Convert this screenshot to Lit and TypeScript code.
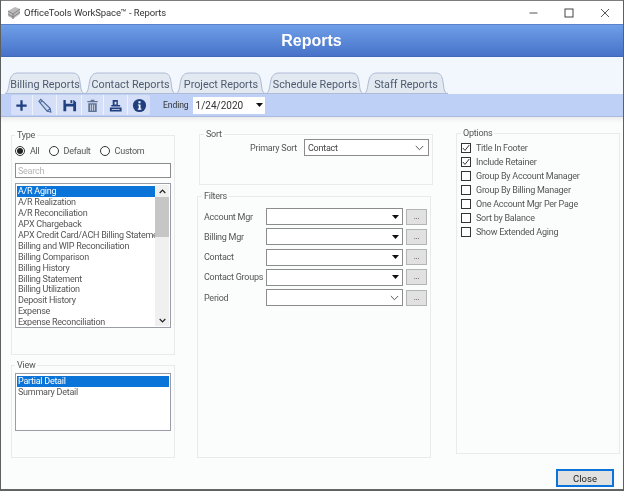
import { LitElement, html, css, svg } from "lit";
import { customElement } from "lit/decorators.js";

const TABS: [string, number][] = [["Billing Reports", 80], ["Contact Reports", 91], ["Project Reports", 90], ["Schedule Reports", 98], ["Staff Reports", 84]];
const TYPES = ["A/R Aging", "A/R Realization", "A/R Reconciliation", "APX Chargeback", "APX Credit Card/ACH Billing Statement", "Billing and WIP Reconciliation", "Billing Comparison", "Billing History", "Billing Statement", "Billing Utilization", "Deposit History", "Expense", "Expense Reconciliation"];
const OPTIONS: [string, boolean][] = [["Title In Footer", true], ["Include Retainer", true], ["Group By Account Manager", false], ["Group By Billing Manager", false], ["One Account Mgr Per Page", false], ["Sort by Balance", false], ["Show Extended Aging", false]];
const FILTERS: [string, boolean][] = [["Account Mgr", true], ["Billing Mgr", true], ["Contact", true], ["Contact Groups", true], ["Period", false]];

const chevron = html`<svg class="chev" width="9" height="6" viewBox="0 0 9 6"><path d="M.8 1l3.7 3.7L8.2 1" fill="none" stroke="#555" stroke-width="1"/></svg>`;
const caret = html`<svg class="caret" width="7" height="4" viewBox="0 0 7 4"><path d="M0 0h7L3.5 4z" fill="#111"/></svg>`;

const icons = [
  svg`<path d="M8 2.5v11M2.5 8h11" stroke="#1f3f7f" stroke-width="2.4"/>`,
  svg`<path d="M2 3.5L4 1.5 14 11l.8 4-4-.9zM3.500 5L5.500 3M11 14l3-3" fill="#cfd8ea" stroke="#4a689f" stroke-width="1.2"/>`,
  svg`<path fill-rule="evenodd" d="M1.500 2H4v4h8V2h.5L15 4.500V14H1.500zM4.500 9v5h7.500V9z" fill="#1f3f7f"/><path d="M9 2.300h2v3H9z" fill="#1f3f7f"/>`,
  svg`<path d="M6 1.800h4v1.400h3.500v1.400h-11V3.200H6zM3.500 5.500h9V15h-9z" fill="#5f7396"/><path d="M6 7v6.500M8 7v6.500M10 7v6.500" stroke="#cfd8ea"/>`,
  svg`<path d="M5 2h5.500v5.500H13v1.500H3.500V7.500H5zM2 10h12.500v4.500H2z" fill="#1f3f7f"/><path d="M7 4h2v3H7zM4 12h8.500v.9H4z" fill="#dfe7f8"/>`,
  svg`<circle cx="8" cy="8" r="7" fill="#1f3f7f"/><path d="M6.900 3.500h2.200v2H6.900zM6.300 6.800h2.800v4.400h.9v1.300H6.200v-1.300h1v-3.100h-.9z" fill="#fff"/>`,
];

@customElement("app-root")
export class AppRoot extends LitElement {
  static styles = css`
    :host { display: block; width: 624px; height: 491px; overflow: hidden; background: #5d6060;
      font-family: Roboto, "Liberation Sans", sans-serif; font-size: 9px; letter-spacing: -.25px; color: #555; }
    * { box-sizing: border-box; }
    .win { margin: 0 1px; height: 490px; border-top: 1px solid #7d7d7d; background: #fbfdfd; display: flex; flex-direction: column; border-bottom: 1px solid #666; position: relative; filter: blur(.3px); }
    .title { height: 23px; flex: none; background: #fff; display: flex; align-items: center; padding-left: 6px; gap: 3px; font-size: 9.500px; letter-spacing: -.1px; color: #333; }
    .controls { margin-left: auto; display: flex; align-items: center; }
    .controls span { width: 36px; height: 23px; display: flex; align-items: center; justify-content: center; }
    .band { height: 33px; flex: none; background: linear-gradient(#6f9fe8, #4772c8); border-top: 1px solid #5a83cc; border-bottom: 1px solid #3f68b8;
      color: #fff; font-family: "Liberation Sans", sans-serif; letter-spacing: 0; font-weight: bold; font-size: 16px; display: flex; align-items: center; justify-content: center; padding-right: 1px; }
    .tabstrip { height: 37px; flex: none; background: #f2f6fd; display: flex; align-items: flex-end; padding-left: 4px; gap: 0; }
    .tab { position: relative; height: 22px; display: flex; align-items: center; justify-content: center; font-size: 10.800px; letter-spacing: 0; color: #4d5a70; padding-top: 3px; }
    .tab svg { position: absolute; left: 0; top: 0; }
    .tab span { position: relative; }
    .toolbar { height: 23px; flex: none; background: #bfd0f6; border-bottom: 1px solid #a9b9e0; display: flex; align-items: center; padding-left: 10px; }
    .tools { display: flex; height: 20px; background: #d5dff8; border-radius: 2px; }
    .tool { height: 20px; display: flex; align-items: center; justify-content: center; border-right: 1px solid #eef2fd; }
    .tool:last-child { border-right: 0; }
    .ending { margin-left: 13px; margin-right: 4px; font-size: 8.600px; letter-spacing: -.1px; color: #333; }
    .date { width: 72px; height: 17px; background: #fff; display: flex; align-items: center; justify-content: space-between; padding: 0 2px 0 3px; font-size: 10px; letter-spacing: 0; color: #333; }
    .main { flex: 1; display: grid; grid-template-columns: 164px 237px 164px; column-gap: 22px; padding: 11px 0 0 10px; background: linear-gradient(#ececec, #fbfdfd 6px); align-items: start; }
    .main > div { display: flex; flex-direction: column; }
    fieldset { margin: 0; padding: 0; border: 1px solid #e9ebeb; min-width: 0; display: block; }
    legend { padding: 0 2px; margin-left: 0; line-height: 10px; font-size: 9px; color: #555; }
    .col1 { padding-top: 2px; gap: 5px; }
    .col2 { padding-top: 1px; }
    .type { height: 225px; padding: 5px 3px 0 3px; }
    .radios { display: flex; align-items: center; height: 12px; }
    .radios label { display: flex; align-items: center; gap: 5px; }
    .radios label + label { margin-left: 9px; }
    .radio { width: 10px; height: 10px; border: 1px solid #333; border-radius: 50%; display: flex; align-items: center; justify-content: center; background: #fff; }
    .radio.on::after { content: ""; width: 6px; height: 6px; border-radius: 50%; background: #222; }
    .search { margin-top: 6px; height: 15px; border: 1px solid #8c8c8c; background: #fff; color: #b5b5b5; display: flex; align-items: center; padding-left: 2px; }
    .list { margin-top: 5px; height: 145px; border: 1px solid #9a9da6; background: #fff; display: flex; padding: 2px 1px 1px 1px; }
    .rows { flex: 1; min-width: 0; overflow: hidden; }
    .row { height: 10.950px; line-height: 11px; padding-left: 1px; margin-top: 0; white-space: nowrap; overflow: hidden; }
    .row.sel { background: #0a74d8; color: #fff; }
    .sb { width: 14px; flex: none; margin-top: -1px; background: #f0f0f0; display: flex; flex-direction: column; align-items: center; justify-content: space-between; }
    .sb .btn { height: 12px; display: flex; align-items: center; }
    .sb .thumb { width: 100%; height: 40px; background: #c6c6c6; margin-bottom: auto; }
    .view { height: 98px; padding: 3px 3px 0 3px; }
    .view .list { margin-top: 0; height: 58px; }
    .sort { margin-left: 2px; width: 234px; height: 56px; }
    .sort legend { margin-left: 4px; }
    .sort-row { display: flex; align-items: center; justify-content: flex-end; gap: 7px; padding: 0 3px 0 0; height: 17px; }
    .select { height: 17px; border: 1px solid #8c8c8c; background: #fff; display: flex; align-items: center; justify-content: space-between; padding: 0 4px 0 3px; color: #444; }
    .sort .select { width: 125px; }
    .filters { margin-top: 6px; width: 234px; height: 267px; padding: 7px 3px 0 6px; display: block; }
    .filters legend { margin-left: -2px; }
    .frow { display: flex; align-items: center; height: 17px; margin-bottom: 3.300px; }
    .frow .lbl { width: 62px; flex: none; white-space: nowrap; }
    .frow .select { width: 137px; padding-right: 3px; }
    .more { width: 21px; height: 16px; margin-left: 3px; background: #e1e1e1; border: 1px solid #b4b4b4; font-size: 8px; color: #444; display: flex; align-items: center; justify-content: center; line-height: 1; }
    .options { height: 326px; padding: 3px 0 0 4px; }
    .opt { height: 14px; display: flex; align-items: center; gap: 5px; white-space: nowrap; }
    .cb { width: 10px; height: 10px; border: 1px solid #333; background: #fff; flex: none; display: flex; }
    .footer { position: absolute; right: 9px; bottom: 2px; width: 58px; height: 18px; background: #e1e1e1; border: 2px solid #0a74d8; color: #222; display: flex; align-items: center; justify-content: center; font-size: 9.500px; letter-spacing: 0; }
  `;

  private tabShape(w: number) {
    const d = `M0 21.500C3 21.500 3.500 15 4.500 10C5.500 4 8 1 13 1L${w - 13} 1C${w - 7} 1 ${w - 6} 4 ${w - 5} 10L${w - 4} 17C${w - 3.500} 20 ${w - 2} 21.500 ${w} 21.500Z`;
    return html`<svg width=${w} height="22" viewBox="0 0 ${w} 22"><path d=${d} fill="#e3e9f0" stroke="#aebbd6"/></svg>`;
  }

  render() {
    return html`
      <div class="win">
        <div class="title">
          <svg width="14" height="14" viewBox="0 0 14 14"><path d="M1 5l7-4 5 2v5l-7 5-5-3z" fill="#bbb"/><path d="M1 5l5 3 7-5M6 8v5M1 8l5 3 7-5" fill="none" stroke="#777" stroke-width=".8"/></svg>
          <span>OfficeTools WorkSpace™ - Reports</span>
          <div class="controls">
            <span><svg width="10" height="2"><path d="M1.500 1h8" stroke="#555" stroke-width="1"/></svg></span>
            <span><svg width="10" height="10"><rect x="1" y="1" width="8" height="8" fill="none" stroke="#444" stroke-width="1"/></svg></span>
            <span><svg width="10" height="10"><path d="M1 1l8 8M9 1l-8 8" stroke="#444" stroke-width=".9"/></svg></span>
          </div>
        </div>
        <div class="band">Reports</div>
        <div class="tabstrip">
          ${TABS.map(([t, w]) => html`<div class="tab" style="width:${w}px">${this.tabShape(w)}<span>${t}</span></div>`)}
        </div>
        <div class="toolbar">
          <div class="tools">
            ${icons.map((ic, i) => html`<div class="tool" style="width:${[22, 24, 25, 22, 24, 22][i]}px"><svg width="15" height="15" viewBox="0 0 16 16">${ic}</svg></div>`)}
          </div>
          <span class="ending">Ending</span>
          <div class="date"><span>1/24/2020</span>${caret}</div>
        </div>
        <div class="main">
          <div class="col1">
            <fieldset class="type">
              <legend>Type</legend>
              <div class="radios">
                <label><span class="radio on"></span>All</label>
                <label><span class="radio"></span>Default</label>
                <label><span class="radio"></span>Custom</label>
              </div>
              <div class="search">Search</div>
              <div class="list">
                <div class="rows">${TYPES.map((t, i) => html`<div class="row ${i === 0 ? "sel" : ""}">${t}</div>`)}</div>
                <div class="sb">
                  <div class="btn"><svg width="7" height="5" viewBox="0 0 7 5"><path d="M.7 4l2.800-2.800L6.300 4" fill="none" stroke="#222" stroke-width="1.200"/></svg></div>
                  <div class="thumb"></div>
                  <div class="btn"><svg width="7" height="5" viewBox="0 0 7 5"><path d="M.7 1l2.800 2.800L6.300 1" fill="none" stroke="#222" stroke-width="1.200"/></svg></div>
                </div>
              </div>
            </fieldset>
            <fieldset class="view">
              <legend>View</legend>
              <div class="list">
                <div class="rows"><div class="row sel">Partial Detail</div><div class="row">Summary Detail</div></div>
              </div>
            </fieldset>
          </div>
          <div class="col2">
            <fieldset class="sort">
              <legend>Sort</legend>
              <div class="sort-row"><span>Primary Sort</span><div class="select"><span>Contact</span>${chevron}</div></div>
            </fieldset>
            <fieldset class="filters">
              <legend>Filters</legend>
              ${FILTERS.map(([l, dark]) => html`<div class="frow"><span class="lbl">${l}</span><div class="select"><span></span>${dark ? caret : chevron}</div><div class="more">...</div></div>`)}
            </fieldset>
          </div>
          <div>
            <fieldset class="options">
              <legend>Options</legend>
              ${OPTIONS.map(([l, on]) => html`<div class="opt"><span class="cb">${on ? html`<svg width="8" height="8" viewBox="0 0 8 8"><path d="M.8 4l2.200 2.400L7.300 1" fill="none" stroke="#333" stroke-width="1"/></svg>` : ""}</span>${l}</div>`)}
            </fieldset>
          </div>
        </div>
        <div class="footer">Close</div>
      </div>
    `;
  }
}
